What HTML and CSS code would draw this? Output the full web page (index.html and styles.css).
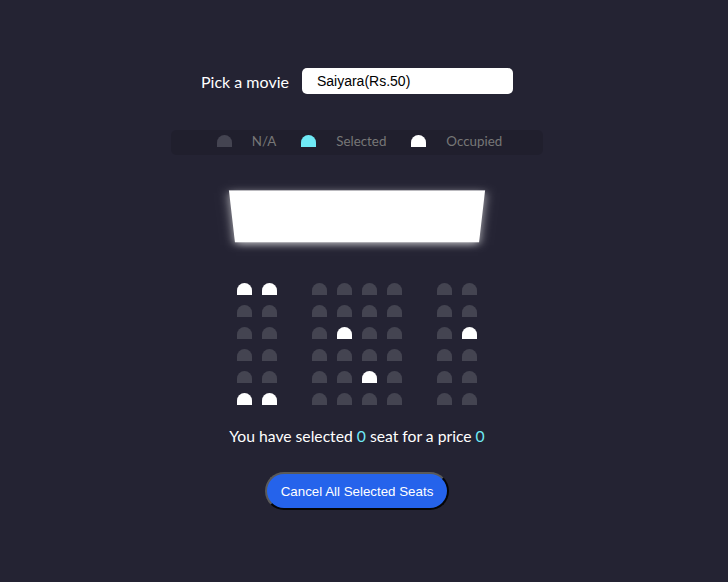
FILE: index.html
```html
<!DOCTYPE html>
<html lang="en">
<head>
<meta charset="UTF-8">
<title>Movie Seat Booking</title>
<link rel="stylesheet" href="styles.css">
</head>
<body>
<div class="app">
  <div class="movie-container">
    <label class="movie-label" for="movie">Pick a movie</label>
    <div class="movie-select" id="movie">Saiyara(Rs.50)</div>
  </div>

  <ul class="showcase">
    <li><div class="seat"></div><small>N/A</small></li>
    <li><div class="seat selected"></div><small>Selected</small></li>
    <li><div class="seat occupied"></div><small>Occupied</small></li>
  </ul>

  <div class="container">
    <div class="screen"></div>

    <div class="rows">
      <div class="row">
        <div class="seat occupied"></div><div class="seat occupied"></div><div class="gap"></div>
        <div class="seat"></div><div class="seat"></div><div class="seat"></div><div class="seat"></div><div class="gap"></div>
        <div class="seat"></div><div class="seat"></div>
      </div>
      <div class="row">
        <div class="seat"></div><div class="seat"></div><div class="gap"></div>
        <div class="seat"></div><div class="seat"></div><div class="seat"></div><div class="seat"></div><div class="gap"></div>
        <div class="seat"></div><div class="seat"></div>
      </div>
      <div class="row">
        <div class="seat"></div><div class="seat"></div><div class="gap"></div>
        <div class="seat"></div><div class="seat occupied"></div><div class="seat"></div><div class="seat"></div><div class="gap"></div>
        <div class="seat"></div><div class="seat occupied"></div>
      </div>
      <div class="row">
        <div class="seat"></div><div class="seat"></div><div class="gap"></div>
        <div class="seat"></div><div class="seat"></div><div class="seat"></div><div class="seat"></div><div class="gap"></div>
        <div class="seat"></div><div class="seat"></div>
      </div>
      <div class="row">
        <div class="seat"></div><div class="seat"></div><div class="gap"></div>
        <div class="seat"></div><div class="seat"></div><div class="seat occupied"></div><div class="seat"></div><div class="gap"></div>
        <div class="seat"></div><div class="seat"></div>
      </div>
      <div class="row">
        <div class="seat occupied"></div><div class="seat occupied"></div><div class="gap"></div>
        <div class="seat"></div><div class="seat"></div><div class="seat"></div><div class="seat"></div><div class="gap"></div>
        <div class="seat"></div><div class="seat"></div>
      </div>
    </div>
  </div>

  <p class="text">You have selected <span class="num">0</span> seat for a price <span class="num">0</span></p>

  <button class="cancel-btn" type="button">Cancel All Selected Seats</button>
</div>
</body>
</html>
```

FILE: styles.css
```css
* {
  box-sizing: border-box;
}

html, body {
  margin: 0;
  padding: 0;
  background-color: #242333;
}

body {
  color: #fff;
  font-family: Lato, "Open Sans", sans-serif;
  height: 582px;
  overflow: hidden;
}

.app {
  width: 714px;
  display: flex;
  flex-direction: column;
  align-items: center;
}

.movie-container {
  margin-top: 68px;
  display: flex;
  align-items: center;
  gap: 13px;
  height: 26px;
}

.movie-label {
  font-size: 16px;
  color: #fff;
}

.movie-select {
  width: 211px;
  height: 26px;
  background: #fff;
  color: #000;
  border-radius: 5px;
  font-family: "Liberation Sans", Arial, sans-serif;
  font-size: 14px;
  line-height: 26px;
  padding-left: 15px;
}

.showcase {
  list-style: none;
  margin: 36px 0 0;
  padding: 5px 31px 0 31px;
  height: 25px;
  background: rgba(0, 0, 0, 0.1);
  border-radius: 5px;
  color: #777;
  display: flex;
  align-items: flex-start;
}

.showcase li {
  display: flex;
  align-items: center;
  margin: 0 10px;
  height: 12px;
}

.showcase li small {
  font-size: 13.333px;
  margin-left: 15px;
}

.seat {
  background-color: #444451;
  width: 15px;
  height: 12px;
  margin: 5px;
  border-top-left-radius: 10px;
  border-top-right-radius: 10px;
}

.seat.selected {
  background-color: #6feaf6;
}

.seat.occupied {
  background-color: #fff;
}

.showcase .seat {
  margin: 0 5px;
}

.container {
  perspective: 1000px;
  margin-top: 28px;
  display: flex;
  flex-direction: column;
  align-items: center;
}

.screen {
  background-color: #fff;
  width: 250px;
  height: 68px;
  transform: rotateX(-45deg);
  box-shadow: 0 3px 10px rgba(255, 255, 255, 0.7);
}

.rows {
  margin-top: 27px;
}

.row {
  display: flex;
}

.gap {
  width: 25px;
}

.text {
  margin: 16px 0 0;
  font-size: 15.7px;
  line-height: 20px;
}

.num {
  color: #6feaf6;
}

.cancel-btn {
  margin-top: 26px;
  height: 38px;
  padding: 0 14px;
  background-color: #2563eb;
  color: #fff;
  border: 2px outset #5a5a5a;
  border-radius: 20px;
  font-family: "Liberation Sans", Arial, sans-serif;
  font-size: 13.333px;
}
```
